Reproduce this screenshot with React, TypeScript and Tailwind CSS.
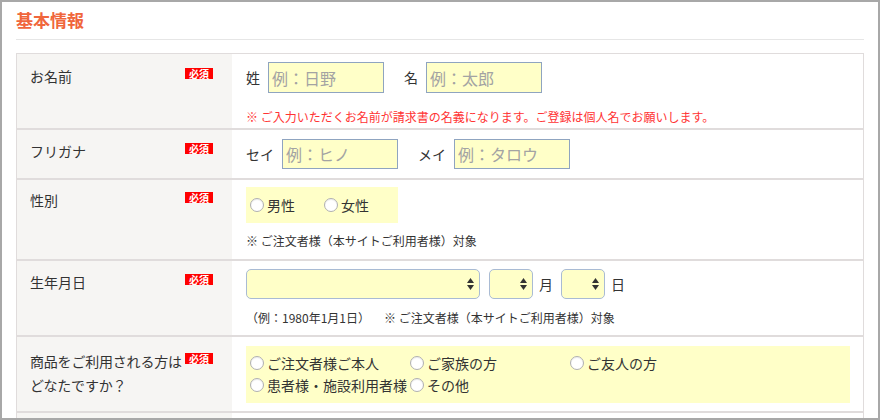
import React from 'react';

const Badge: React.FC<{ className?: string }> = ({ className = 'mt-[2px]' }) => (
  <span
    className={`${className} w-[28px] h-[11px] shrink-0 bg-[#ff0000] text-white text-[10px] font-bold leading-[11px] flex items-center justify-center`}
  >
    必須
  </span>
);

const Radio: React.FC<{ label: string; className?: string }> = ({ label, className = '' }) => (
  <label className={`flex items-center whitespace-nowrap ${className}`}>
    <span className="w-[14px] h-[14px] shrink-0 rounded-full border border-[#b0b0b0] bg-white shadow-[inset_0_1px_1px_rgba(0,0,0,0.08)]" />
    <span className="ml-[3px]">{label}</span>
  </label>
);

const Arrows = () => (
  <svg width="7" height="12" viewBox="0 0 7 12" className="absolute right-[6px] top-1/2 -translate-y-1/2 pointer-events-none">
    <polygon points="0,5 3.5,0 7,5" fill="#333" />
    <polygon points="0,7 3.5,12 7,7" fill="#333" />
  </svg>
);

const Select: React.FC<{ width: string }> = ({ width }) => (
  <div className={`relative h-[30px] ${width}`}>
    <select className="appearance-none w-full h-full rounded-[5px] border border-[#a9bbd4] bg-[#ffffc8] outline-none" />
    <Arrows />
  </div>
);

const TextInput: React.FC<{ placeholder: string; h?: string }> = ({ placeholder, h = 'h-[31px]' }) => (
  <input
    placeholder={placeholder}
    className={`w-[116px] ${h} border border-[#8fa4c0] bg-[#ffffc8] px-[3px] text-[16px] text-[#333] placeholder:text-[#a3a3a3] outline-none`}
  />
);

const Label: React.FC<{ children: React.ReactNode; pt?: string }> = ({ children, pt = 'pt-[11px]' }) => (
  <div className={`w-[215px] shrink-0 bg-[#f6f5f3] pl-[13px] pr-[19px] ${pt} flex justify-between items-start`}>
    <span className="leading-[20px]">{children}</span>
    <Badge />
  </div>
);

export default function App() {
  return (
    <div className="w-[880px] h-[420px] overflow-hidden border-2 border-[#a8a8a8] bg-white text-[14px] text-[#333] font-['Noto_Sans_CJK_JP','Noto_Sans',sans-serif]">
      <div className="mx-[14px] pt-[6px] pb-[7px] border-b border-[#e6e6e6]">
        <h2 className="text-[17px] font-bold leading-[24px] text-[#f0663c]">基本情報</h2>
      </div>

      <div className="ml-[14px] mt-[13px] w-[848px] border-x border-t border-[#e0dcdc]">
        {/* お名前 */}
        <div className="flex border-b-2 border-[#e0dcdc]">
          <Label pt="pt-[12px]">お名前</Label>
          <div className="flex-1 pl-[14px] pt-[8px] pb-[2px]">
            <div className="flex items-center h-[31px]">
              <span>姓</span>
              <span className="ml-[8px]">
                <TextInput placeholder="例：日野" />
              </span>
              <span className="ml-[20px]">名</span>
              <span className="ml-[8px]">
                <TextInput placeholder="例：太郎" />
              </span>
            </div>
            <p className="mt-[15px] text-[12px] leading-[18px] text-[#ff3333]">
              ※ ご入力いただくお名前が請求書の名義になります。ご登録は個人名でお願いします。
            </p>
          </div>
        </div>

        {/* フリガナ */}
        <div className="flex border-b-2 border-[#e0dcdc]">
          <Label>フリガナ</Label>
          <div className="flex-1 pl-[14px] py-[9px]">
            <div className="flex items-center h-[30px]">
              <span>セイ</span>
              <span className="ml-[8px]">
                <TextInput placeholder="例：ヒノ" h="h-[30px]" />
              </span>
              <span className="ml-[20px]">メイ</span>
              <span className="ml-[8px]">
                <TextInput placeholder="例：タロウ" h="h-[30px]" />
              </span>
            </div>
          </div>
        </div>

        {/* 性別 */}
        <div className="flex border-b-2 border-[#e0dcdc]">
          <Label pt="pt-[10px]">性別</Label>
          <div className="flex-1 pl-[14px] pt-[7px] pb-[9px]">
            <div className="inline-flex items-center h-[36px] bg-[#ffffc8] pl-[4px]">
              <Radio label="男性" className="mr-[29px]" />
              <Radio label="女性" className="mr-[29px]" />
            </div>
            <p className="mt-[9px] text-[12px] leading-[18px]">※ ご注文者様（本サイトご利用者様）対象</p>
          </div>
        </div>

        {/* 生年月日 */}
        <div className="flex border-b-2 border-[#e0dcdc]">
          <Label>生年月日</Label>
          <div className="flex-1 pl-[14px] pt-[8px] pb-[8px]">
            <div className="flex items-center">
              <Select width="w-[234px]" />
              <span className="ml-[9px]">
                <Select width="w-[44px]" />
              </span>
              <span className="ml-[6px]">月</span>
              <span className="ml-[8px]">
                <Select width="w-[44px]" />
              </span>
              <span className="ml-[6px]">日</span>
            </div>
            <p className="mt-[10px] text-[12px] leading-[18px]">
              （例：1980年1月1日）
              <span className="ml-[14px]">※ ご注文者様（本サイトご利用者様）対象</span>
            </p>
          </div>
        </div>

        {/* 商品をご利用される方 */}
        <div className="flex border-b-2 border-[#e0dcdc]">
          <div className="w-[215px] shrink-0 bg-[#f6f5f3] pl-[13px] pr-[19px] pt-[12px] flex justify-between items-start">
            <span className="leading-[24px] whitespace-nowrap tracking-[-0.2px]">
              商品をご利用される方は
              <br />
              どなたですか？
            </span>
            <Badge className="mt-[4px]" />
          </div>
          <div className="flex-1 pl-[14px] pr-[13px] pt-[9px] pb-[8px]">
            <div className="grid grid-cols-[160px_160px_160px] bg-[#ffffc8] pl-[4px] pt-[6px] pb-[7px] leading-[22px]">
              <Radio label="ご注文者様ご本人" />
              <Radio label="ご家族の方" />
              <Radio label="ご友人の方" />
              <Radio label="患者様・施設利用者様" />
              <Radio label="その他" />
            </div>
          </div>
        </div>

        {/* next row (cut off) */}
        <div className="flex h-[40px]">
          <div className="w-[215px] shrink-0 bg-[#f6f5f3]" />
          <div className="flex-1" />
        </div>
      </div>
    </div>
  );
}
